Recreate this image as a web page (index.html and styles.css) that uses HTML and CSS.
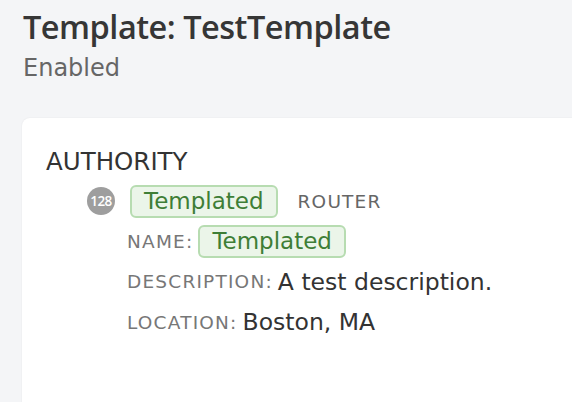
FILE: index.html
```html
<!DOCTYPE html>
<html>
<head>
<meta charset="utf-8">
<link rel="stylesheet" href="styles.css">
</head>
<body>
<header class="header">
  <h1 class="title">Template: TestTemplate</h1>
  <div class="status">Enabled</div>
</header>
<main class="card">
  <div class="section-title">AUTHORITY</div>
  <div class="node">
    <span class="badge">128</span>
    <span class="tag">Templated</span>
    <span class="node-type">ROUTER</span>
  </div>
  <div class="props">
    <div class="prop"><span class="label">NAME:</span><span class="tag">Templated</span></div>
    <div class="prop"><span class="label">DESCRIPTION:</span><span class="value">A test description.</span></div>
    <div class="prop"><span class="label">LOCATION:</span><span class="value">Boston, MA</span></div>
  </div>
</main>
</body>
</html>
```

FILE: styles.css
```css
html, body {
  margin: 0;
  padding: 0;
  background: #f4f5f7;
  overflow: hidden;
}
body {
  font-family: "DejaVu Sans", "Open Sans", sans-serif;
  color: #333;
  width: 572px;
  height: 402px;
}
.header {
  padding: 7px 23px 0;
}
.title {
  margin: 0;
  font-family: "Open Sans", "Noto Sans", sans-serif;
  font-size: 32.5px;
  font-weight: 600;
  line-height: 40px;
  color: #363636;
  letter-spacing: -0.5px;
}
.status {
  margin-top: 6px;
  font-size: 24px;
  line-height: 30px;
  color: #666;
}
.card {
  margin: 35px 0 0 22px;
  width: 600px;
  height: 320px;
  background: #fff;
  border-radius: 8px 0 0 0;
  box-shadow: 0 0 2px rgba(0,0,0,0.07);
  padding: 30px 24px 0;
  box-sizing: border-box;
}
.section-title {
  font-size: 24.5px;
  line-height: 28px;
  color: #333;
}
.node {
  display: flex;
  align-items: center;
  height: 34px;
  margin-top: 8px;
  padding-left: 41px;
}
.badge {
  width: 28px;
  height: 28px;
  border-radius: 50%;
  background: #9e9e9e;
  color: #fff;
  font-family: "Open Sans", sans-serif;
  font-size: 13.5px;
  font-weight: 600;
  display: flex;
  align-items: center;
  justify-content: center;
  letter-spacing: -0.6px;
  margin-right: 15px;
}
.tag {
  display: inline-block;
  background: #ebf5e9;
  border: 2px solid #b7dcb1;
  border-radius: 6px;
  color: #3e7e36;
  font-size: 23px;
  line-height: 29px;
  padding: 0 12px;
}
.node-type {
  margin-left: 20px;
  font-size: 18.5px;
  letter-spacing: 1.2px;
  color: #666;
}
.props {
  padding-left: 81px;
  margin-top: 3px;
}
.prop {
  display: flex;
  align-items: center;
  height: 40.5px;
}
.label {
  font-size: 18.5px;
  letter-spacing: 1.2px;
  color: #777;
  margin-right: 5px;
}
.value {
  font-size: 23.5px;
  color: #333;
}
```
